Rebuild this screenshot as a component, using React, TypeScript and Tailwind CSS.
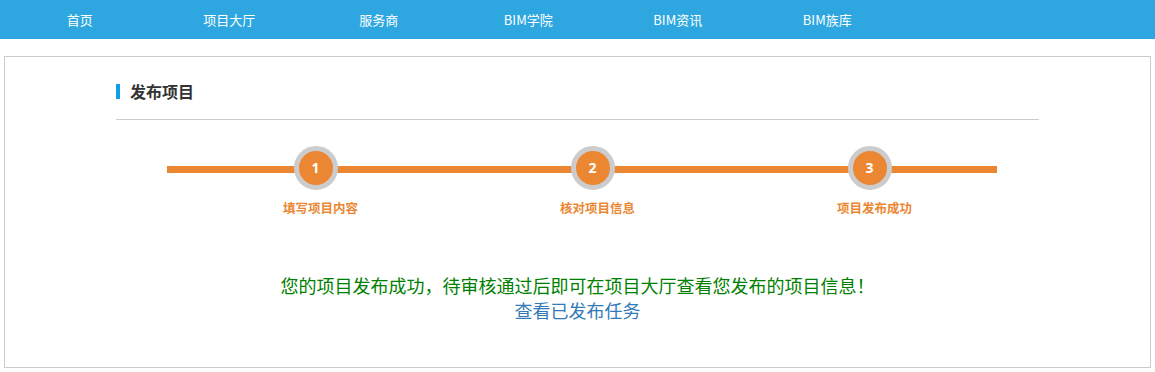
import React from "react";

const navItems = ["首页", "项目大厅", "服务商", "BIM学院", "BIM资讯", "BIM族库"];
const steps = [
  { n: "1", label: "填写项目内容" },
  { n: "2", label: "核对项目信息" },
  { n: "3", label: "项目发布成功" },
];

export default function App() {
  return (
    <div
      className="w-[1155px] h-[372px] bg-white overflow-hidden"
      style={{ fontFamily: '"Noto Sans CJK SC", "Liberation Sans", sans-serif' }}
    >
      <div className="h-[39px] bg-[#2ea7e0] flex items-center pl-[5px]">
        {navItems.map((t) => (
          <div key={t} className="w-[149.5px] text-center text-white text-[13px] leading-[20px]">
            {t}
          </div>
        ))}
      </div>
      <div className="mt-[17px] mx-[4px] h-[312px] border border-[#cccccc]">
        <div className="px-[111px]">
          <div className="pt-[22px] h-[47px] flex items-end">
            <div className="h-[25px] flex items-center">
              <div className="w-[4px] h-[15px] bg-[#119ee8]" />
              <div className="ml-[10px] text-[16px] font-bold text-[#333333] leading-[25px]">发布项目</div>
            </div>
          </div>
          <div className="mt-[15px] border-t border-[#cccccc]" />
          <div className="relative mt-[26px]">
            <div className="absolute left-[51px] top-[20px] w-[830px] h-[7px] bg-[#eb8733]" />
            <div className="relative flex pl-[61px]">
              {steps.map((s) => (
                <div key={s.n} className="w-[277px] flex flex-col items-center">
                  <div className="w-[44px] h-[44px] rounded-full border-[5px] border-[#cccccc] bg-[#eb8733] flex items-center justify-center">
                    <span
                      className="text-white font-bold text-[14px] leading-none"
                      style={{ fontFamily: '"Open Sans", "Noto Sans", sans-serif' }}
                    >
                      {s.n}
                    </span>
                  </div>
                  <div className="mt-[9px] pl-[10px] text-[12.5px] font-bold text-[#eb8733] leading-[18px]">
                    {s.label}
                  </div>
                </div>
              ))}
            </div>
          </div>
        </div>
        <div className="mt-[56px] text-center text-[18px] leading-[25px]">
          <div className="text-[#008000]">您的项目发布成功，待审核通过后即可在项目大厅查看您发布的项目信息！</div>
          <div className="text-[#337ab7]">查看已发布任务</div>
        </div>
      </div>
    </div>
  );
}
